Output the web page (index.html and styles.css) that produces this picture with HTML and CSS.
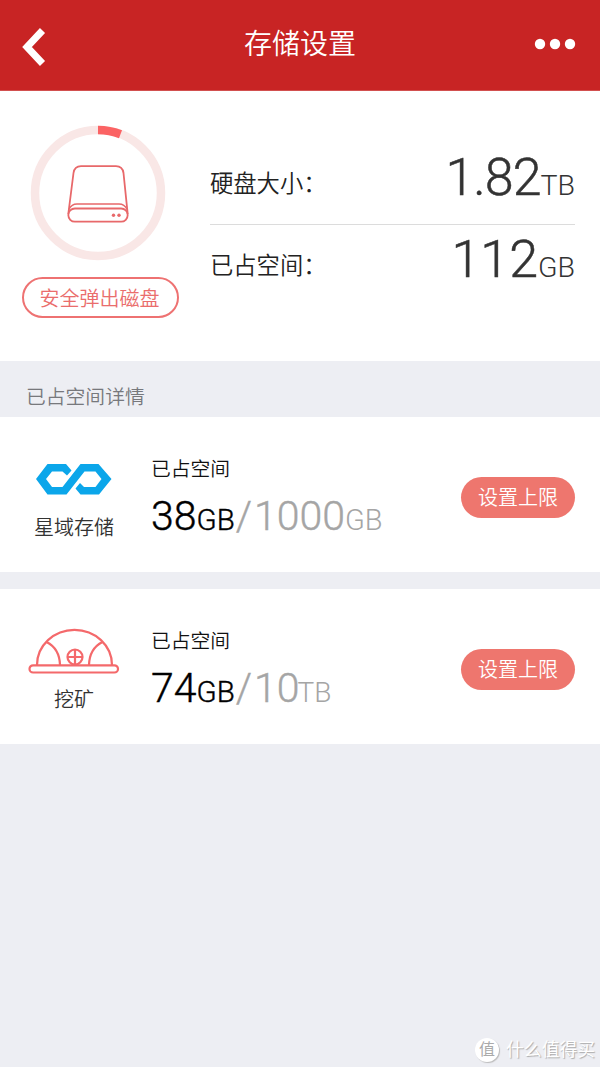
FILE: index.html
```
<!DOCTYPE html>
<html lang="zh-CN">
<head>
  <meta charset="UTF-8">
  <meta name="viewport" content="width=device-width, initial-scale=1.0">
  <title>存储设置</title>
  <link rel="stylesheet" href="styles.css">
</head>
<body>
  <!-- Header -->
  <header class="header">
    <svg class="back" width="24" height="40" viewBox="0 0 24 40">
      <path d="M20.5 3.5 L5 20 L20.5 36.5" fill="none" stroke="#fff" stroke-width="7"/>
    </svg>
    <h1 class="title">存储设置</h1>
    <svg class="more" width="42" height="12" viewBox="0 0 42 12">
      <circle cx="6" cy="6" r="5.2"/>
      <circle cx="21" cy="6" r="5.2"/>
      <circle cx="36" cy="6" r="5.2"/>
    </svg>
  </header>

  <!-- Disk summary -->
  <section class="summary">
    <div class="disk">
      <svg class="ring" width="136" height="136" viewBox="0 0 136 136" fill="none">
        <circle cx="68" cy="68" r="63" stroke="#f9e7e6" stroke-width="8.5"/>
        <path d="M68 5 A63 63 0 0 1 90.5 9.2" stroke="#fb6364" stroke-width="8.5"/>
        <g stroke="#e8686a" stroke-width="1.8">
          <path d="M38.3 89 L43.5 48 Q44.5 41.2 51 41.2 H86 Q92.5 41.2 93.5 48 L97.7 89"/>
          <path d="M39 84.5 Q41.5 79 47 79 H89 Q94.5 79 97 84.5" stroke-width="1.4"/>
          <rect x="38.3" y="83.5" width="59.4" height="13.2" rx="6.6"/>
        </g>
        <circle cx="83.5" cy="90.3" r="1.7" fill="#e8686a"/>
        <circle cx="89" cy="90.3" r="1.7" fill="#e8686a"/>
      </svg>
      <button class="eject">安全弹出磁盘</button>
    </div>
    <div class="stats">
      <div class="stat">
        <span class="stat-label">硬盘大小：</span>
        <span class="stat-value size">1.82<small>TB</small></span>
      </div>
      <div class="stat">
        <span class="stat-label">已占空间：</span>
        <span class="stat-value">112<small>GB</small></span>
      </div>
    </div>
  </section>

  <h2 class="section-title">已占空间详情</h2>

  <!-- Usage list -->
  <section class="item">
    <div class="item-icon">
      <svg width="92" height="48" viewBox="0 0 92 48">
        <path d="M8 25 L19.5 10 H38 L43.5 16.5 L39 21.5 L34.5 17.5 H24 L18 25 L24 33 H34.5 L52.5 10 H70.5 L83.5 25 L71 40.5 H52.5 L47.5 34.5 L52 29 L56 33 H67.5 L73.5 25 L67.5 17.5 H56.5 L38.5 40.5 H19.5 Z" fill="#0ba6ea"/>
      </svg>
      <span class="item-name">星域存储</span>
    </div>
    <div class="usage">
      <div class="usage-label">已占空间</div>
      <div class="usage-value">38<small>GB</small><span class="limit"><span class="slash">/</span>1000<small>GB</small></span></div>
    </div>
    <button class="set">设置上限</button>
  </section>

  <section class="item">
    <div class="item-icon">
      <svg width="92" height="48" viewBox="0 0 92 48" fill="none" stroke="#f4696b" stroke-width="2.2">
        <rect x="1.5" y="39.3" width="88.5" height="7.2" rx="3.6"/>
        <path d="M9 39 A37.5 35.2 0 0 1 84 39"/>
        <path d="M18.5 16 Q31.5 22.5 32 39 M74.5 16 Q61.500 22.5 61 39"/>
        <circle cx="47" cy="31" r="7.5"/>
        <path d="M47 23.5 V38.5 M39.5 31 H54.5"/>
      </svg>
      <span class="item-name">挖矿</span>
    </div>
    <div class="usage">
      <div class="usage-label">已占空间</div>
      <div class="usage-value">74<small>GB</small><span class="limit"><span class="slash">/</span>10<small class="tb">TB</small></span></div>
    </div>
    <button class="set">设置上限</button>
  </section>

  <footer class="watermark">
    <span class="badge">值</span>
    <span>什么值得买</span>
  </footer>
</body>
</html>
```
FILE: styles.css
```
* {
  box-sizing: border-box;
}

body {
  margin: 0;
  height: 1067px;
  display: flex;
  flex-direction: column;
  overflow: hidden;
  background: #edeef3;
  color: #333;
  font-family: Roboto, "Noto Sans CJK SC", sans-serif;
}

.header {
  height: 91px;
  padding: 0 24px 0 22px;
  display: grid;
  grid-template-columns: 1fr auto 1fr;
  align-items: center;
  background: #c82424;
  border-bottom: 1px solid #d2504f;
}

.back {
  margin-top: 4px;
}

.title {
  margin: 0 -1px 0 1px;
  color: #fff;
  font-size: 28px;
  font-weight: 350;
  line-height: 40px;
}

.more {
  justify-self: end;
  margin-bottom: 3px;
  fill: #fff;
}

.summary {
  height: 270px;
  display: flex;
  background: #fff;
}

.disk {
  width: 210px;
  padding: 34px 0 0 22px;
}

.ring {
  display: block;
  margin-left: 8px;
}

.eject {
  display: block;
  width: 157px;
  height: 41px;
  margin-top: 16px;
  padding: 0 2px 0 0;
  border: 2px solid #ee7272;
  border-radius: 21px;
  background: #fff;
  color: #ea6d6c;
  font: 350 20px/36px "Noto Sans CJK SC", sans-serif;
}

.stats {
  width: 365px;
  padding-top: 52px;
}

.stat {
  height: 82px;
  display: flex;
  justify-content: space-between;
}

.stat:first-child {
  border-bottom: 1px solid #dcdcdc;
}

.stat-label {
  padding-top: 24px;
  color: #222;
  font-size: 23.3px;
  font-weight: 350;
  line-height: 34px;
}

.stat-value {
  font-size: 52px;
  font-weight: 300;
  line-height: 70px;
  -webkit-text-stroke: 0.5px;
}

.size {
  letter-spacing: -1px;
}

small {
  font-size: 29px;
  letter-spacing: 0;
  -webkit-text-stroke: 0;
}

.stat-value small {
  font-size: 28.5px;
}

.section-title {
  height: 56px;
  margin: 0;
  padding: 21px 26px 0;
  color: #77787c;
  font-size: 19.8px;
  font-weight: 350;
  line-height: 32px;
}

.item {
  height: 155px;
  margin-bottom: 17px;
  padding: 0 25px 0 28px;
  display: flex;
  background: #fff;
}

.item-icon {
  width: 92px;
  padding-top: 37px;
  display: flex;
  flex-direction: column;
  align-items: center;
}

.item-name {
  margin-top: 10px;
  font-size: 20px;
  line-height: 32px;
  font-weight: 350;
}

.usage {
  padding: 37px 0 0 31px;
  flex: 1;
}

.usage-label {
  color: #111;
  font-size: 19.8px;
  font-weight: 350;
  line-height: 32px;
}

.usage-value {
  color: #000;
  font-size: 41px;
  font-weight: 300;
  line-height: 61px;
  -webkit-text-stroke: 0.4px;
}

.usage-value > small {
  font-size: 29.5px;
  -webkit-text-stroke: 0.4px;
}

.limit {
  color: #a5a5a5;
}

.slash {
  margin: 0 2px 0 1px;
}

.tb {
  margin-left: -2px;
  font-size: 28px;
}

.set {
  align-self: center;
  width: 114px;
  height: 41px;
  margin-top: 5px;
  padding: 0;
  border: none;
  border-radius: 21px;
  background: #ee766e;
  color: #fff;
  font: 350 20px/38px "Noto Sans CJK SC", sans-serif;
}

.watermark {
  margin: auto 5px 3px auto;
  display: flex;
  align-items: center;
  gap: 7px;
  color: #fff;
  font-size: 17.8px;
  line-height: 28px;
  text-shadow: 1px 1px 1px #aaa;
}

.badge {
  width: 24px;
  height: 24px;
  border-radius: 50%;
  background: #fff;
  box-shadow: 1px 1px 1px #bbb;
  color: #aaa;
  font-size: 16px;
  line-height: 23px;
  text-align: center;
  text-shadow: none;
}
```
